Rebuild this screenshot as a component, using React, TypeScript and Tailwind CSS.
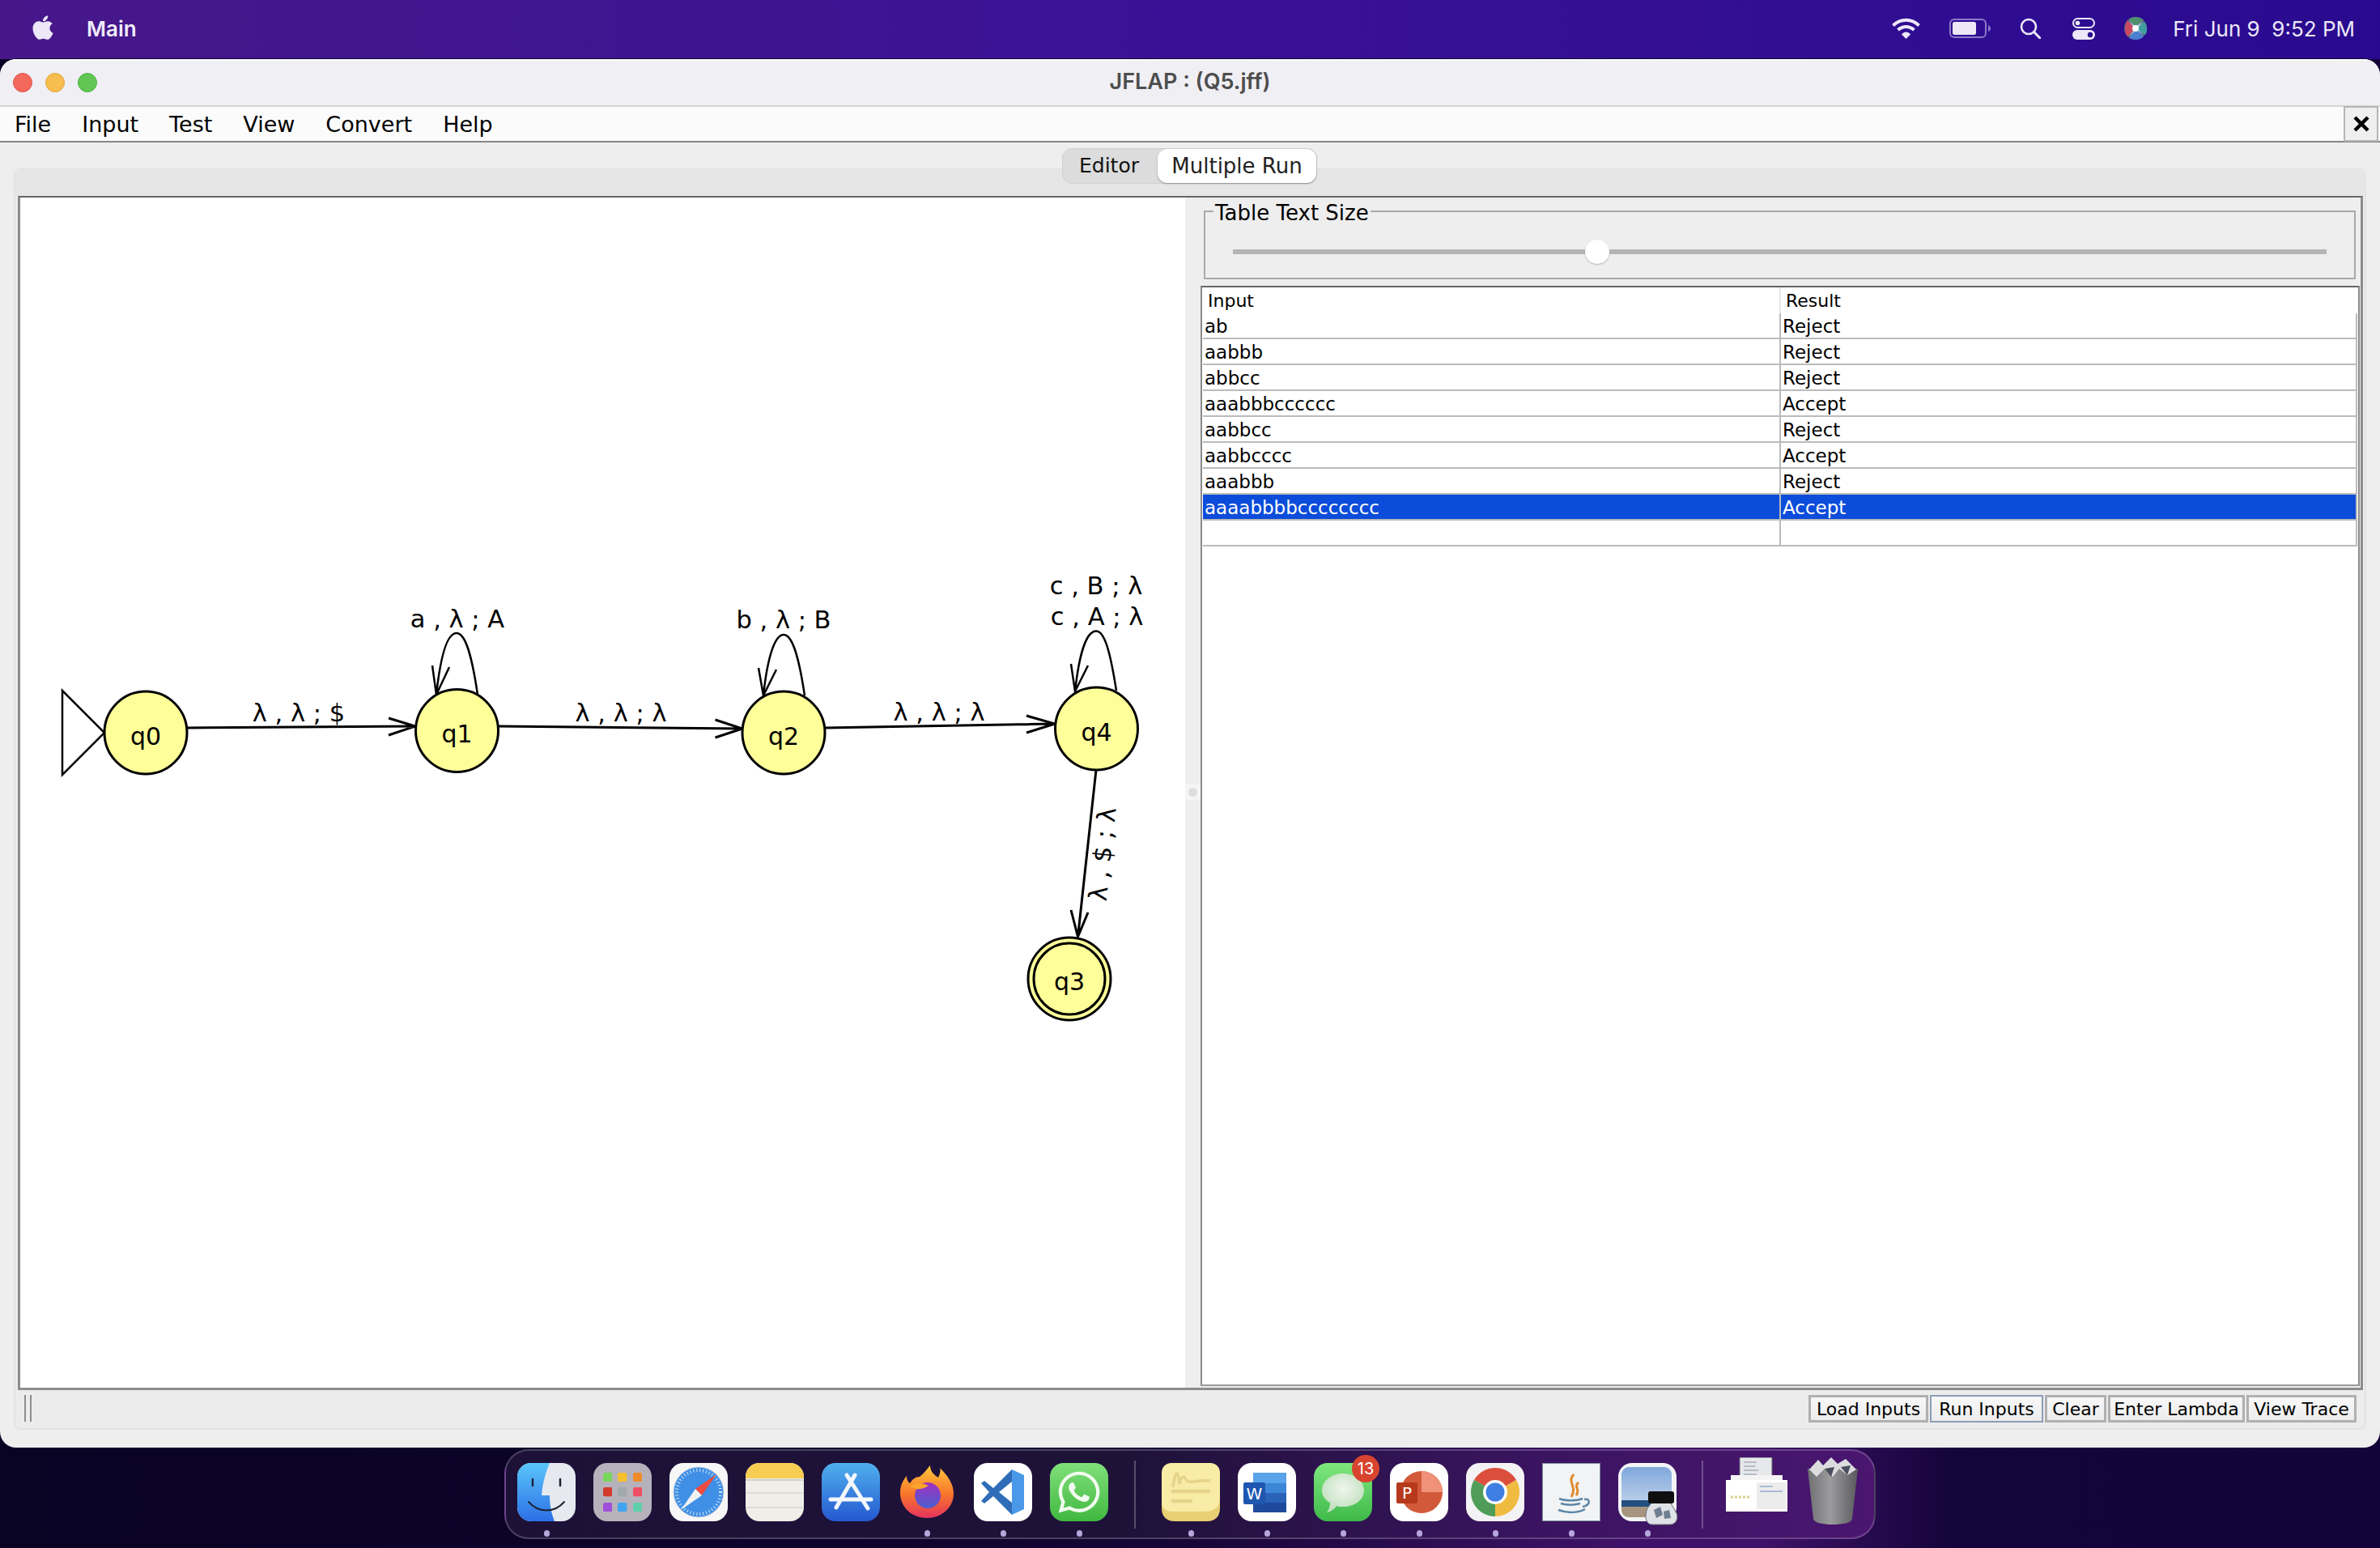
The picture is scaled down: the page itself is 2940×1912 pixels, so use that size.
import { FaApple, FaWhatsapp } from 'react-icons/fa';

const menus = ['File', 'Input', 'Test', 'View', 'Convert', 'Help'];

const rows = [
  ['ab', 'Reject'],
  ['aabbb', 'Reject'],
  ['abbcc', 'Reject'],
  ['aaabbbcccccc', 'Accept'],
  ['aabbcc', 'Reject'],
  ['aabbcccc', 'Accept'],
  ['aaabbb', 'Reject'],
  ['aaaabbbbcccccccc', 'Accept'],
  ['', ''],
];

const buttons = [
  { label: 'Load Inputs', width: 'w-[148px]', focus: false },
  { label: 'Run Inputs', width: 'w-[140px]', focus: true },
  { label: 'Clear', width: 'w-[76px]', focus: false },
  { label: 'Enter Lambda', width: 'w-[169px]', focus: false },
  { label: 'View Trace', width: 'w-[136px]', focus: false },
];

// coordinates are screen pixels, the svg viewBox starts at the canvas corner
const states = [
  { name: 'q0', cx: 180, cy: 905, base: 920 },
  { name: 'q1', cx: 564.5, cy: 902.5, base: 917 },
  { name: 'q2', cx: 968, cy: 905, base: 920 },
  { name: 'q4', cx: 1354.5, cy: 900, base: 915 },
  { name: 'q3', cx: 1321, cy: 1209, base: 1223 },
];

const edges = [
  'M231 899L513 897M480 887L513 897L480 908',
  'M616 897L917 900M883.5 889L917 900L883.5 911',
  'M1019 899L1303 894M1268 884L1303 894L1268 905',
  'M1354 951L1331.5 1157M1323 1124L1331.5 1157L1344 1127',
];

const loops = [
  'M590 858C582 804 574 782 564 782C552 782 544 812 539 858M534 822L539 858L555 824',
  'M994 859C986 806 978 784 968 784C957 784 948 812 943 859M937 825L943 859L959 827',
  'M1379 853C1371 802 1364 779.5 1354 779.5C1342 779.5 1333 808 1328 854M1323 820L1328 854L1344 822',
];

const labels = [
  { text: 'λ , λ ; $', x: 369, y: 891 },
  { text: 'λ , λ ; λ', x: 767, y: 891 },
  { text: 'λ , λ ; λ', x: 1160, y: 890 },
  { text: 'a , λ ; A', x: 565, y: 775 },
  { text: 'b , λ ; B', x: 968, y: 776 },
  { text: 'c , B ; λ', x: 1354, y: 734 },
  { text: 'c , A ; λ', x: 1355, y: 772 },
];

function Diagram() {
  return (
    <svg viewBox="25 244 1439 1470" className="block w-[1439px] h-[1470px]">
      <path d="M77 853L129 905L77 957Z" fill="none" stroke="#000" strokeWidth="2.5" />
      {edges.map((d) => (
        <path key={d} d={d} fill="none" stroke="#000" strokeWidth="3" />
      ))}
      {loops.map((d) => (
        <path key={d} d={d} fill="none" stroke="#000" strokeWidth="2.5" />
      ))}
      {states.map((s) => (
        <g key={s.name}>
          <circle cx={s.cx} cy={s.cy} r="51" fill="#ffff99" stroke="#000" strokeWidth="3" />
          {s.name === 'q3' && <circle cx={s.cx} cy={s.cy} r="44" fill="none" stroke="#000" strokeWidth="3" />}
          <text x={s.cx} y={s.base} textAnchor="middle" fontSize="30" fill="#000">
            {s.name}
          </text>
        </g>
      ))}
      {labels.map((l) => (
        <text key={l.text + l.x} x={l.x} y={l.y} textAnchor="middle" fontSize="30.5" fill="#000">
          {l.text}
        </text>
      ))}
      <text x="0" y="0" textAnchor="middle" fontSize="31" fill="#000" transform="translate(1372.5 1056) rotate(-84)">
        λ , $ ; λ
      </text>
    </svg>
  );
}

function StatusIcons() {
  return (
    <div className="flex items-center text-[#ece8f8]">
      <svg viewBox="0 0 35 26" className="w-[35px] h-[26px]">
        <path d="M1.5 9.5C11 0.5 24 0.5 33.5 9.5" fill="none" stroke="currentColor" strokeWidth="4" />
        <path d="M7.5 15C13.5 9.5 21.5 9.5 27.5 15" fill="none" stroke="currentColor" strokeWidth="4" />
        <path d="M12 20.5C15 16.5 20 16.5 23 20.5L17.5 26Z" fill="currentColor" />
      </svg>
      <svg viewBox="0 0 51 24" className="w-[51px] h-[24px] ml-[36px]">
        <rect x="1" y="1" width="44" height="22" rx="5" fill="none" stroke="#8c7ac8" strokeWidth="2" />
        <rect x="4" y="4" width="29" height="16" rx="2.5" fill="currentColor" />
        <path d="M48 8C50 9 51 10 51 12C51 14 50 15 48 16Z" fill="#8c7ac8" />
      </svg>
      <svg viewBox="0 0 26 26" className="w-[26px] h-[26px] ml-[36px]">
        <circle cx="11" cy="11" r="9" fill="none" stroke="currentColor" strokeWidth="2.6" />
        <path d="M17.5 17.5L25 25" stroke="currentColor" strokeWidth="3" strokeLinecap="round" />
      </svg>
      <svg viewBox="0 0 28 27" className="w-[28px] h-[27px] ml-[39px]">
        <rect x="1" y="1" width="26" height="11" rx="5.5" fill="none" stroke="currentColor" strokeWidth="2" />
        <circle cx="6.5" cy="6.5" r="2.8" fill="currentColor" />
        <rect x="0" y="15" width="28" height="12" rx="6" fill="currentColor" />
        <circle cx="22" cy="21" r="3.2" fill="#2a0a8e" />
      </svg>
      <svg viewBox="0 0 28 28" className="w-[28px] h-[28px] ml-[36px]">
        <defs>
          <radialGradient id="siriGlow" cx="50%" cy="50%" r="50%">
            <stop offset="0%" stopColor="#ffffff" />
            <stop offset="35%" stopColor="#a8c4dc" />
            <stop offset="100%" stopColor="#4a5f7a" />
          </radialGradient>
        </defs>
        <circle cx="14" cy="14" r="14" fill="url(#siriGlow)" />
        <path d="M6 2C12 -1 20 -1 24 4C20 7 17 9 14 12C11 9 8 6 6 2Z" fill="#4f8f6f" />
        <path d="M4 4C1 9 -1 18 4 24C8 21 11 18 13 14C10 10 7 7 4 4Z" fill="#c64a62" />
        <path d="M6 26C11 29 20 29 24 24C20 20 18 18 15 15C12 19 9 22 6 26Z" fill="#4a7fd0" />
        <path d="M25 6C29 11 29 18 26 22C22 20 19 17 16 14C19 11 22 9 25 6Z" fill="#3f9d9e" />
        <circle cx="14" cy="14" r="4" fill="#fff" />
      </svg>
    </div>
  );
}

function Finder() {
  return (
    <svg viewBox="0 0 72 72" className="w-[72px] h-[72px]">
      <defs>
        <linearGradient id="finderA" x1="0" y1="0" x2="0" y2="1">
          <stop offset="0%" stopColor="#5ac6fa" />
          <stop offset="100%" stopColor="#2c6fe6" />
        </linearGradient>
        <clipPath id="finderClip">
          <rect width="72" height="72" rx="17" />
        </clipPath>
      </defs>
      <g clipPath="url(#finderClip)">
        <rect width="72" height="72" fill="#e6e9f0" />
        <path d="M0 0H40C34 14 31 28 30 40H40C40 52 42 62 46 72H0Z" fill="url(#finderA)" />
      </g>
      <path d="M19 20V28M53 20V28" stroke="#1c2433" strokeWidth="2.5" strokeLinecap="round" />
      <path d="M14 48C26 62 46 62 58 48" fill="none" stroke="#1c2433" strokeWidth="2" strokeLinecap="round" />
    </svg>
  );
}

function Launchpad() {
  const colors = ['#78d65a', '#f6c02e', '#ee8c2c', '#d33a2c', '#a2a9ad', '#ef4f64', '#a04fd8', '#3fa4f2', '#5fcfaa'];
  return (
    <div className="w-[72px] h-[72px] rounded-[17px] bg-[#b6b2bb] grid grid-cols-3 gap-[7px] p-[12px]">
      {colors.map((c) => (
        <svg key={c} viewBox="0 0 10 10" className="w-full h-full">
          <rect width="10" height="10" rx="2" fill={c} />
        </svg>
      ))}
    </div>
  );
}

function Safari() {
  return (
    <svg viewBox="0 0 72 72" className="w-[72px] h-[72px]">
      <rect width="72" height="72" rx="17" fill="#f7f7f7" />
      <circle cx="36" cy="36" r="31" fill="#3f8fe6" stroke="#d0d5dc" />
      <circle cx="36" cy="36" r="27" fill="none" stroke="#d5e6f8" strokeWidth="4" strokeDasharray="1 3" />
      <path d="M58 14L40 40L32 32Z" fill="#ee4b3e" />
      <path d="M14 58L32 32L40 40Z" fill="#f2f2f2" />
    </svg>
  );
}

function NotesApp() {
  return (
    <svg viewBox="0 0 72 72" className="w-[72px] h-[72px]">
      <defs>
        <clipPath id="notesClip">
          <rect width="72" height="72" rx="17" />
        </clipPath>
      </defs>
      <g clipPath="url(#notesClip)">
        <rect width="72" height="72" fill="#efeee9" />
        <rect width="72" height="19" fill="#f7cd52" />
        <path d="M0 21H72" stroke="#b5b3ab" strokeWidth="2" strokeDasharray="1 1" />
        <path d="M0 37H72M0 55H72" stroke="#d7d5cf" strokeWidth="1.5" />
      </g>
    </svg>
  );
}

function AppStore() {
  return (
    <svg viewBox="0 0 72 72" className="w-[72px] h-[72px]">
      <defs>
        <linearGradient id="storeA" x1="0" y1="0" x2="0" y2="1">
          <stop offset="0%" stopColor="#4fb0ee" />
          <stop offset="100%" stopColor="#2558d0" />
        </linearGradient>
      </defs>
      <rect width="72" height="72" rx="17" fill="url(#storeA)" />
      <path d="M31 15L57 56M41 15L18 55M11 45H61" stroke="#f4f7fb" strokeWidth="5" strokeLinecap="round" />
    </svg>
  );
}

function Firefox() {
  return (
    <svg viewBox="0 0 72 72" className="w-[72px] h-[72px]">
      <defs>
        <linearGradient id="foxA" x1="0" y1="0" x2="0" y2="1">
          <stop offset="0%" stopColor="#ffc93c" />
          <stop offset="55%" stopColor="#f7742a" />
          <stop offset="100%" stopColor="#e5335f" />
        </linearGradient>
        <linearGradient id="foxB" x1="0" y1="0" x2="0" y2="1">
          <stop offset="0%" stopColor="#a22fbf" />
          <stop offset="100%" stopColor="#4b5fd0" />
        </linearGradient>
      </defs>
      <path d="M36 68C17 68 3 54 3 37C3 28 6 22 11 16C11 21 13 24 15 25C18 20 22 17 27 17C33 12 36 8 40 3C40 10 44 14 50 18C53 12 53 8 52 6C62 16 69 26 69 38C69 55 54 68 36 68Z" fill="url(#foxA)" />
      <circle cx="37" cy="40" r="16" fill="url(#foxB)" />
      <path d="M14 30C22 24 30 24 38 28C32 32 26 33 22 32C20 30 17 30 14 30Z" fill="#f9a52c" />
    </svg>
  );
}

function VsCode() {
  return (
    <svg viewBox="0 0 72 72" className="w-[72px] h-[72px]">
      <rect width="72" height="72" rx="17" fill="#ffffff" />
      <path d="M47 8L62 15V57L47 64Z" fill="#4a98e8" />
      <path d="M47 8L24 31L13 22L9 25L19 36L9 47L13 50L24 41L47 64V49L31 36L47 23Z" fill="#2f6db8" />
    </svg>
  );
}

function WhatsApp() {
  return (
    <div className="w-[72px] h-[72px] rounded-[17px] bg-linear-to-b from-[#7fe07a] to-[#3fb83f] flex items-center justify-center">
      <FaWhatsapp className="w-[58px] h-[58px] text-[#f2fbef]" />
    </div>
  );
}

function Stickies() {
  return (
    <svg viewBox="0 0 72 72" className="w-[72px] h-[72px]">
      <path d="M0 20H72V56C72 66 66 72 56 72H16C6 72 0 66 0 56Z" fill="#e9cf74" />
      <path d="M12 0H60C67 0 72 5 72 12V44C72 56 62 60 52 60H12C5 60 0 55 0 48V12C0 5 5 0 12 0Z" fill="#f9eca6" />
      <path d="M14 30C17 8 20 8 22 26C25 14 28 16 31 22C36 26 44 20 60 22" fill="none" stroke="#e6d48a" strokeWidth="3.5" />
      <path d="M12 35H60M12 47H38" stroke="#e6d48a" strokeWidth="4.5" />
    </svg>
  );
}

function Word() {
  return (
    <svg viewBox="0 0 72 72" className="w-[72px] h-[72px]">
      <rect width="72" height="72" rx="17" fill="#ffffff" />
      <rect x="19" y="12" width="41" height="13" fill="#5aa3ea" />
      <rect x="19" y="25" width="41" height="12" fill="#3c86d8" />
      <rect x="19" y="37" width="41" height="12" fill="#2a62b8" />
      <rect x="19" y="49" width="41" height="12" fill="#1f4a9c" />
      <rect x="7" y="24" width="27" height="27" rx="2" fill="#1e56b0" />
      <text x="20.5" y="45" textAnchor="middle" fontSize="20" fill="#fff">W</text>
    </svg>
  );
}

function Messages() {
  return (
    <div className="relative w-[72px] h-[72px]">
      <svg viewBox="0 0 72 72" className="w-[72px] h-[72px]">
        <defs>
          <linearGradient id="msgA" x1="0" y1="0" x2="0" y2="1">
            <stop offset="0%" stopColor="#7fe87e" />
            <stop offset="100%" stopColor="#3fb94a" />
          </linearGradient>
          <radialGradient id="msgB" cx="50%" cy="40%" r="60%">
            <stop offset="0%" stopColor="#f0f5ee" />
            <stop offset="100%" stopColor="#bfe0bc" />
          </radialGradient>
        </defs>
        <rect width="72" height="72" rx="17" fill="url(#msgA)" />
        <path d="M36 13C50 13 62 22 62 34C62 46 50 54 36 54C32 54 30 54 28 53C26 56 22 60 16 61C19 57 20 53 20 49C13 45 10 40 10 34C10 22 22 13 36 13Z" fill="url(#msgB)" />
      </svg>
      <span className="absolute left-[47px] -top-[10px] w-[34px] h-[34px] rounded-full bg-[#d9442f] text-white text-[20px] leading-[34px] text-center [font-family:Inter,sans-serif]">
        13
      </span>
    </div>
  );
}

function PowerPoint() {
  return (
    <svg viewBox="0 0 72 72" className="w-[72px] h-[72px]">
      <rect width="72" height="72" rx="17" fill="#ffffff" />
      <circle cx="39" cy="36" r="26" fill="#d2593a" />
      <path d="M39 10A26 26 0 0 1 65 36H39Z" fill="#f0917a" />
      <rect x="8" y="24" width="26" height="26" rx="2" fill="#b7391c" />
      <text x="21" y="44" textAnchor="middle" fontSize="20" fill="#fff">P</text>
    </svg>
  );
}

function Chrome() {
  return (
    <svg viewBox="0 0 72 72" className="w-[72px] h-[72px]">
      <rect width="72" height="72" rx="17" fill="#f3f2f4" />
      <path d="M36 36L10 21A30 30 0 0 1 62 21Z" fill="#dc4f3d" />
      <path d="M36 36L62 21A30 30 0 0 1 36 66Z" fill="#f0bb41" />
      <path d="M36 36L36 66A30 30 0 0 1 10 21Z" fill="#4f9d58" />
      <circle cx="36" cy="36" r="15" fill="#ffffff" />
      <circle cx="36" cy="36" r="11.5" fill="#3f7fe3" />
    </svg>
  );
}

function JavaApp() {
  return (
    <svg viewBox="0 0 72 72" className="w-[72px] h-[72px]">
      <rect x="0.5" y="0.5" width="71" height="71" fill="#f1f3f4" stroke="#7f8f9c" />
      <path d="M39 14C30 24 44 28 36 42M45 24C38 30 48 32 42 40" fill="none" stroke="#e08a2c" strokeWidth="3" />
      <path d="M21 44C28 47 42 47 50 44M23 50C30 52 40 52 47 50M20 58C30 62 44 62 53 57M52 45C60 43 60 52 50 54" fill="none" stroke="#5c86a8" strokeWidth="2.5" />
    </svg>
  );
}

function Preview() {
  return (
    <svg viewBox="0 0 72 72" className="w-[72px] h-[72px] overflow-visible">
      <defs>
        <linearGradient id="previewSky" x1="0" y1="0" x2="0" y2="1">
          <stop offset="0%" stopColor="#7fa8dc" />
          <stop offset="100%" stopColor="#d5dfee" />
        </linearGradient>
      </defs>
      <rect width="72" height="72" rx="17" fill="#f4f4f6" />
      <rect x="4" y="5" width="62" height="62" rx="9" fill="url(#previewSky)" />
      <path d="M4 46H66V56H4Z" fill="#24507f" />
      <path d="M4 54H40V67H13C8 67 4 63 4 58Z" fill="#a8957f" />
      <path d="M36 56L42 48H64L72 62C75 70 70 76 64 76H42C34 76 32 66 36 56Z" fill="#dfe2e6" stroke="#6b7077" />
      <rect x="37" y="35" width="32" height="15" rx="3" fill="#0f0f0f" />
      <path d="M44 58L52 54L55 64L47 68ZM56 60L63 58L65 68L57 69Z" fill="#6f7f92" />
    </svg>
  );
}

function DocThumb() {
  return (
    <svg viewBox="0 0 76 67" className="w-[76px] h-[67px]">
      <rect x="17" y="0" width="40" height="26" fill="#e6e8ec" stroke="#5d6066" strokeWidth="1" />
      <path d="M22 6H38M22 11H36M22 16H40M22 21H38" stroke="#8790a0" strokeWidth="1" />
      <rect x="6" y="22" width="64" height="10" fill="#f4f4f4" />
      <rect x="0" y="28" width="76" height="39" fill="#ffffff" />
      <rect x="38" y="31" width="36" height="33" fill="#ececec" />
      <path d="M6 49H30" stroke="#d8d28a" strokeWidth="3" strokeDasharray="3 2" />
      <path d="M42 36H58M42 42H70" stroke="#a9bdd6" strokeWidth="2" />
    </svg>
  );
}

function Trash() {
  return (
    <svg viewBox="0 0 64 83" className="w-[64px] h-[83px]">
      <defs>
        <linearGradient id="trashA" x1="0" y1="0" x2="1" y2="0">
          <stop offset="0%" stopColor="#6e6f71" />
          <stop offset="45%" stopColor="#9c9c9e" />
          <stop offset="100%" stopColor="#58595c" />
        </linearGradient>
      </defs>
      <path d="M1 14L8 76C9 81 20 83 32 83C44 83 55 81 56 76L63 14Z" fill="url(#trashA)" />
      <path d="M3 15L14 3L20 10L30 0L38 8L48 2L61 15L50 22L40 14L32 24L22 14L12 24Z" fill="#dcdcdf" />
      <path d="M22 14L30 24L34 12ZM42 12L50 22L54 10Z" fill="#4a4f5e" />
    </svg>
  );
}

const dockLeft = [
  { name: 'finder', icon: <Finder />, dot: true },
  { name: 'launchpad', icon: <Launchpad />, dot: false },
  { name: 'safari', icon: <Safari />, dot: false },
  { name: 'notes', icon: <NotesApp />, dot: false },
  { name: 'appstore', icon: <AppStore />, dot: false },
  { name: 'firefox', icon: <Firefox />, dot: true },
  { name: 'vscode', icon: <VsCode />, dot: true },
  { name: 'whatsapp', icon: <WhatsApp />, dot: true },
];

const dockMiddle = [
  { name: 'stickies', icon: <Stickies />, dot: true },
  { name: 'word', icon: <Word />, dot: true },
  { name: 'messages', icon: <Messages />, dot: true },
  { name: 'powerpoint', icon: <PowerPoint />, dot: true },
  { name: 'chrome', icon: <Chrome />, dot: true },
  { name: 'java', icon: <JavaApp />, dot: true },
  { name: 'preview', icon: <Preview />, dot: true },
];

function DockItem({ icon, dot }: { icon: React.ReactNode; dot: boolean }) {
  return (
    <div className="w-[72px] flex flex-col items-center">
      {icon}
      {dot && <div className="mt-[11px] w-[7px] h-[8px] rounded-full bg-[#b7a6dc]" />}
    </div>
  );
}

export default function App() {
  return (
    <div className="w-[2940px] h-[1912px] overflow-hidden flex flex-col [font-family:'DejaVu_Sans',sans-serif] bg-[linear-gradient(90deg,#090324_0%,#0e032c_35%,#170637_50%,#3e1268_68%,#3e1268_74%,#15043b_82%,#14033a_100%)]">
      {/* menu bar */}
      <div className="h-[73px] shrink-0 flex items-center justify-between pl-[37px] pr-[31px] pb-[3px] bg-linear-to-r from-[#47178a] via-[#3a1196] to-[#290a8f] [font-family:Inter,sans-serif]">
        <div className="flex items-center">
          <FaApple className="w-[32px] h-[34px] -mt-[3px] text-[#ece8f8]" />
          <span className="ml-[38px] text-[26px] font-semibold text-[#efebfa]">Main</span>
        </div>
        <div className="flex items-center">
          <StatusIcons />
          <span className="ml-[32px] text-[26px] text-[#ece8f8] whitespace-pre">Fri Jun 9  9:52 PM</span>
        </div>
      </div>

      {/* window */}
      <div className="h-[1715px] shrink-0 flex flex-col rounded-[20px] overflow-hidden bg-[#eeeeee] shadow-[0_-1px_0_#0a0a2a]">
        <div className="relative h-[59px] shrink-0 flex items-center justify-center pb-[2px] bg-[#f0eff4] border-t-2 border-b-2 border-t-[#f9f9fb] border-b-[#d6d6d6]">
          <div className="absolute left-[16px] top-[15px] flex gap-[16px]">
            <div className="w-[24px] h-[24px] rounded-full bg-[#f2695c] border border-[#e0534a]" />
            <div className="w-[24px] h-[24px] rounded-full bg-[#f6bd4f] border border-[#e0a53c]" />
            <div className="w-[24px] h-[24px] rounded-full bg-[#61c654] border border-[#4fb043]" />
          </div>
          <span className="text-[27px] font-semibold text-[#4d4d4d] [font-family:Inter,sans-serif]">JFLAP : (Q5.jff)</span>
        </div>

        <div className="relative h-[44px] shrink-0 flex items-center justify-between pl-[18px] bg-[#fbfbfb] border-b-2 border-[#868686]">
          <div className="flex gap-[38px] pt-[3px] text-[27px] text-black">
            {menus.map((m) => (
              <span key={m}>{m}</span>
            ))}
          </div>
          <div className="w-[43px] h-[44px] mr-[2px] flex items-center justify-center bg-[#efefef] border-2 border-[#b5b5b5]">
            <svg viewBox="0 0 20 20" className="w-[20px] h-[20px]">
              <path d="M2 2L18 18M18 2L2 18" stroke="#000" strokeWidth="4.5" />
            </svg>
          </div>
        </div>

        <div className="relative flex-1 pt-[32px] px-[17px]">
          {/* tab switcher sits across the pane's top edge */}
          <div className="absolute left-[1312px] top-[7px] w-[315px] h-[44px] flex rounded-[12px] bg-[#dcdcdc] border border-[#d0d0d0] z-10 text-[25px]">
            <div className="w-[114px] flex items-center justify-center text-[#111]">Editor</div>
            <div className="ml-[3px] flex-1 flex items-center justify-center rounded-[12px] bg-white shadow-[0_1px_2px_#00000055] text-[26px] text-[#222]">Multiple Run</div>
          </div>

          <div className="h-[1558px] flex flex-col rounded-[8px] border-2 border-[#e3e3e3] bg-[#ececec]">
            <div className="h-[32px] shrink-0 bg-[#e6e6e6] rounded-t-[8px]" />

            <div className="h-[1475px] shrink-0 ml-[3px] mr-[2px] flex border-t-2 border-t-[#666666] border-x-[3px] border-x-[#8c8c8c] border-b-[3px] border-b-[#8c8c8c] bg-[#eeeeee]">
              <div className="w-[1439px] h-[1470px] shrink-0 bg-white">
                <Diagram />
              </div>

              <div className="w-[19px] shrink-0 flex flex-col pt-[724px] items-stretch">
                <div className="h-[20px] flex items-center justify-center bg-[#f5f5f5]">
                  <div className="w-[11px] h-[11px] rounded-full bg-[#dedede]" />
                </div>
              </div>

              <div className="flex-1 min-w-0 flex flex-col pt-[2px]">
                <fieldset className="ml-[4px] w-[1423px] h-[99px] shrink-0 border-2 border-[#a9a9a9]">
                  <legend className="ml-[10px] px-[2px] h-[30px] pt-[2px] text-[26px] leading-[30px] text-black">Table Text Size</legend>
                  <div className="mt-[20px] mx-[34px] h-[30px] flex items-center">
                    <div className="w-[435px] h-[6px] bg-[#b5b5b5]" />
                    <div className="w-[30px] h-[30px] shrink-0 rounded-full bg-white shadow-[0_1px_2px_#00000040]" />
                    <div className="flex-1 h-[6px] bg-[#b5b5b5]" />
                  </div>
                </fieldset>

                <div className="mt-[8px] w-[1432px] h-[1359px] shrink-0 bg-white border-t-2 border-t-[#666666] border-x-2 border-x-[#8a8a8a] border-b-2 border-b-[#999999] text-black">
                  <div className="h-[32px] flex items-center text-[22px]">
                    <div className="w-[713px] pl-[7px]">Input</div>
                    <div className="pl-[6px] border-l-2 border-[#e8e8e8]">Result</div>
                  </div>
                  {rows.map(([input, result], i) => (
                    <div
                      key={input + i}
                      className={`ml-[1px] w-[1426px] h-[32px] flex border-b-2 border-[#bbbbbb] text-[23px] leading-[33px] ${
                        i === 7 ? 'bg-[#0b4cdb] text-white' : ''
                      }`}
                    >
                      <div className="w-[714px] pl-[2px] border-r-2 border-[#bbbbbb]">{input}</div>
                      <div className="flex-1 pl-[2px] border-r-2 border-[#bbbbbb]">{result}</div>
                    </div>
                  ))}
                </div>
              </div>
            </div>

            <div className="flex-1 flex justify-between pt-[6px] pl-[11px] pr-[10px]">
              <div className="flex gap-[5px] h-[33px]">
                <div className="w-[2px] bg-[#8e8e8e]" />
                <div className="w-[2px] bg-[#8e8e8e]" />
              </div>
              <div className="flex gap-[2px] h-[34px]">
                {buttons.map((b) => (
                  <div
                    key={b.label}
                    className={`${b.width} flex items-center justify-center text-[22px] text-black bg-linear-to-b from-[#f8f8f8] to-[#ececec] ${
                      b.focus ? 'border-2 border-[#8a9db5]' : 'border-[3px] border-[#b0b0b0]'
                    }`}
                  >
                    {b.label}
                  </div>
                ))}
              </div>
            </div>
          </div>
        </div>
      </div>

      {/* dock */}
      <div className="mt-[2px] ml-[623px] w-[1694px] h-[111px] shrink-0 flex items-start pt-[15px] pl-[14px] rounded-[30px] border-2 border-[#ffffff33] bg-[linear-gradient(90deg,#1d1138_0%,#1e1238_45%,#3a1460_75%,#4a1670_100%)]">
        <div className="flex gap-[22px]">
          {dockLeft.map((d) => (
            <DockItem key={d.name} icon={d.icon} dot={d.dot} />
          ))}
        </div>
        <div className="w-[2px] h-[84px] -mt-[3px] mx-[32px] bg-[#ffffff40]" />
        <div className="flex gap-[22px]">
          {dockMiddle.map((d) => (
            <DockItem key={d.name} icon={d.icon} dot={d.dot} />
          ))}
        </div>
        <div className="w-[2px] h-[84px] -mt-[3px] ml-[31px] bg-[#ffffff40]" />
        <div className="ml-[28px] -mt-[7px]">
          <DocThumb />
        </div>
        <div className="ml-[24px] -mt-[7px]">
          <Trash />
        </div>
      </div>
    </div>
  );
}
